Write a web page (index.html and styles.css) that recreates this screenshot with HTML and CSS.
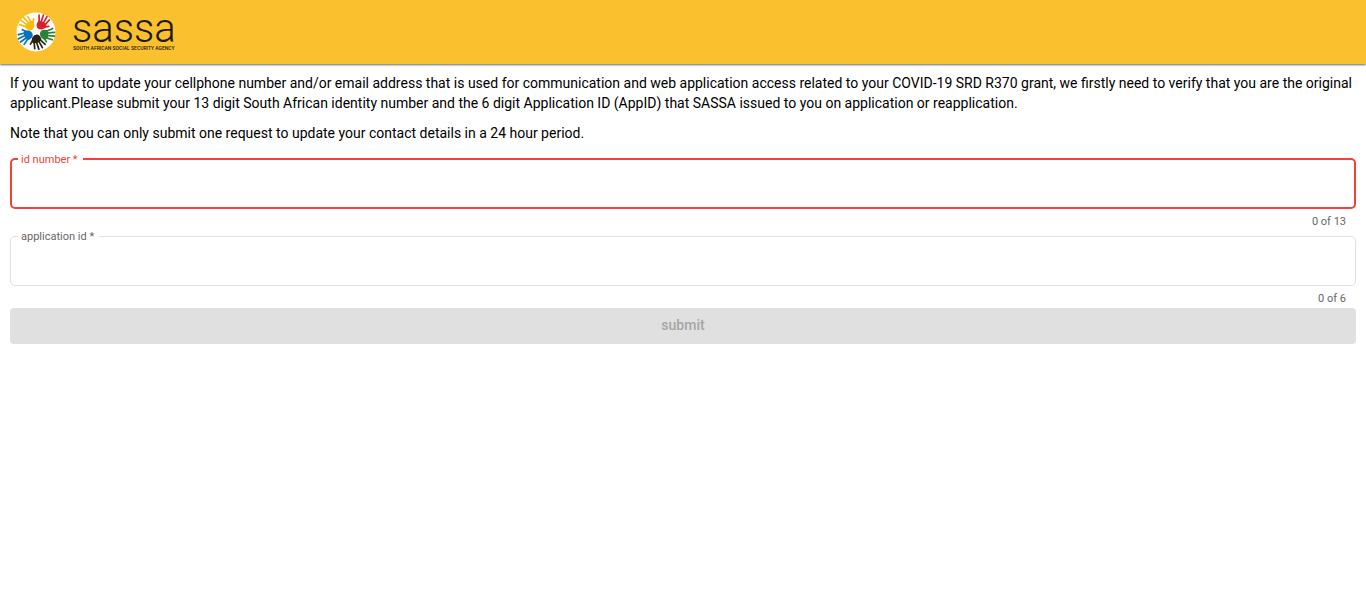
FILE: index.html
```html
<!DOCTYPE html>
<html lang="en">
<head>
    <meta charset="UTF-8">
    <meta name="viewport" content="width=device-width, initial-scale=1.0">
    <title>SASSA - Update contact details</title>
    <link rel="stylesheet" href="styles.css">
</head>
<body>
    <header class="toolbar">
        <svg class="logo" viewBox="0 0 40 40" aria-hidden="true">
            <defs>
                <!-- one open hand pointing up, fingers fanned from the palm -->
                <g id="hand">
                    <path fill="currentColor" stroke="none" d="M-4.4 -7 Q0 -9.6 4.2 -7.2 L5.8 -5.4 L3.6 -1.6 Q0 1.4 -3 -0.8 Q-5.2 -3 -4.4 -7Z"/>
                    <path fill="none" stroke="currentColor" stroke-width="1.7" stroke-linecap="round" d="M-3.8 -7.4 L-6.4 -12.2 M-1.7 -8.4 L-2.6 -14.4 M1.1 -8.4 L1.2 -14.6 M3.6 -7.4 L4.9 -12.8 M4 -4.4 L7.4 -7"/>
                </g>
            </defs>
            <circle cx="20" cy="20" r="19.5" fill="#fff"/>
            <use href="#hand" color="#fbb90f" transform="translate(17 17) rotate(-44)"/>
            <use href="#hand" color="#d8222a" transform="translate(23 17) rotate(28)"/>
            <use href="#hand" color="#2b8136" transform="translate(24 22) rotate(94)"/>
            <use href="#hand" color="#29230f" transform="translate(19 23) rotate(160)"/>
            <use href="#hand" color="#0871bd" transform="translate(16 21) rotate(242)"/>
        </svg>
        <div class="brand">
            <div class="brand-name">sassa</div>
            <div class="brand-sub">SOUTH AFRICAN SOCIAL SECURITY AGENCY</div>
        </div>
    </header>

    <main class="content">
        <p>If you want to update your cellphone number and/or email address that is used for communication and web application access related to your COVID-19 SRD R370 grant, we firstly need to verify that you are the original applicant.Please submit your 13 digit South African identity number and the 6 digit Application ID (AppID) that SASSA issued to you on application or reapplication.</p>
        <p>Note that you can only submit one request to update your contact details in a 24 hour period.</p>

        <form>
            <fieldset class="field invalid">
                <legend><label for="idNumber">id number *</label></legend>
                <input type="text" id="idNumber" maxlength="13" required>
            </fieldset>
            <div class="hint">0 of 13</div>

            <fieldset class="field">
                <legend><label for="appId">application id *</label></legend>
                <input type="text" id="appId" maxlength="6" required>
            </fieldset>
            <div class="hint">0 of 6</div>

            <button type="submit" class="submit-btn" disabled>submit</button>
        </form>
    </main>
</body>
</html>
```
FILE: styles.css
```css
* {
    box-sizing: border-box;
}
body {
    margin: 0;
    font-family: Roboto, "Liberation Sans", sans-serif;
    font-size: 14px;
    line-height: 20px;
    color: black;
    background: white;
}
.toolbar {
    display: flex;
    align-items: center;
    gap: 16px;
    height: 64px;
    padding: 0 16px;
    background: #fbc02d;
    box-shadow: 0 1px 2px rgba(0, 0, 0, 0.6);
}
.logo {
    width: 40px;
    height: 40px;
}
.brand {
    color: #1d1a0c;
}
.brand-name {
    font-size: 40px;
    font-weight: 300;
    line-height: 32px;
}
.brand-sub {
    padding-left: 1px;
    font-size: 5px;
    font-weight: 500;
    line-height: 6px;
    white-space: nowrap;
}
.content {
    padding: 9px 10px;
}
p {
    margin: 0 0 10px;
}
.field {
    height: 56px;
    margin: 0;
    padding: 0 7px;
    border: 1px solid #e0e0e0;
    border-radius: 5px;
}
.field legend {
    height: 12px;
    padding: 1px 5px 0 3px;
    font-size: 11px;
    line-height: 12px;
    color: #666;
}
.field input {
    display: block;
    width: 100%;
    height: 36px;
    padding: 0 3px;
    border: none;
    outline: none;
    background: transparent;
    font: inherit;
}
.field.invalid {
    padding: 0 6px;
    border: 2px solid #f44336;
}
.field.invalid legend {
    color: #f44336;
}
.hint {
    padding: 7px 10px 2px;
    font-size: 11px;
    line-height: 12px;
    text-align: right;
    color: #666;
}
.submit-btn {
    display: block;
    width: 100%;
    height: 36px;
    margin-top: 1px;
    padding: 0 0 2px;
    border: none;
    border-radius: 4px;
    background: #e0e0e0;
    font-family: inherit;
    font-size: 14px;
    font-weight: 500;
    color: #a6a6a6;
}
```
